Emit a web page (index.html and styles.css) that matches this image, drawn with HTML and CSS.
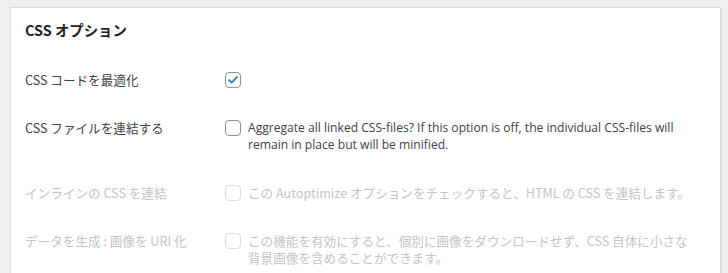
FILE: index.html
```html
<!DOCTYPE html>
<html lang="ja">
<head>
<meta charset="utf-8">
<title>CSS オプション</title>
<link rel="stylesheet" href="styles.css">
</head>
<body>
<div class="panel">
  <h2 class="title">CSS オプション</h2>
  <div class="row">
    <div class="label">CSS コードを最適化</div>
    <div class="field">
      <span class="box checked">
        <svg viewBox="0 0 16 16" width="14" height="14"><path d="M3.6 8.2 L6.6 11 L12.4 4.6" fill="none" stroke="#3582c4" stroke-width="2.2" stroke-linecap="round" stroke-linejoin="round"/></svg>
      </span>
    </div>
  </div>
  <div class="row">
    <div class="label">CSS ファイルを連結する</div>
    <div class="field">
      <span class="box"></span>
      <div class="desc en">Aggregate all linked CSS-files? If this option is off, the individual CSS-files will remain in place but will be minified.</div>
    </div>
  </div>
  <div class="row disabled">
    <div class="label">インラインの CSS を連結</div>
    <div class="field">
      <span class="box"></span>
      <div class="desc">この Autoptimize オプションをチェックすると、HTML の CSS を連結します。</div>
    </div>
  </div>
  <div class="row disabled last">
    <div class="label">データを生成 : 画像を URI 化</div>
    <div class="field">
      <span class="box"></span>
      <div class="desc">この機能を有効にすると、個別に画像をダウンロードせず、CSS 自体に小さな背景画像を含めることができます。</div>
    </div>
  </div>
</div>
</body>
</html>
```
FILE: styles.css
```css
html, body {
  margin: 0;
  padding: 0;
}
body {
  background: #f0f0f1;
  font-family: "Noto Sans CJK JP", "Noto Sans", sans-serif;
  font-size: 12.6px;
  line-height: 17px;
  color: #3c434a;
  height: 273px;
  overflow: hidden;
}
.panel {
  box-sizing: border-box;
  margin: 7px 7px 0 10px;
  height: 266px;
  overflow: hidden;
  background: #fff;
  border: 1px solid #dcdcde;
  border-bottom: none;
  box-shadow: 1px 0 1px rgba(0, 0, 0, 0.06);
  padding: 13px 14px 0 14px;
}
.title {
  margin: 0 0 18px 0;
  font-size: 14.4px;
  line-height: 17px;
  font-weight: 700;
  color: #1d2327;
}
.row {
  display: flex;
  align-items: flex-start;
  padding: 15px 0 16px 0;
}
.row.last {
  padding-bottom: 0;
}
.label {
  width: 200px;
  flex: none;
}
.field {
  display: flex;
  align-items: flex-start;
  gap: 7px;
}
.box {
  flex: none;
  width: 16px;
  height: 16px;
  box-sizing: border-box;
  border: 1px solid #8c8f94;
  border-radius: 4px;
  background: #fff;
  display: flex;
  align-items: center;
  justify-content: center;
  margin-top: 0.5px;
}
.desc {
  width: 452px;
  color: #3c434a;
}
.desc.en {
  font-family: "Open Sans", "Noto Sans", sans-serif;
  font-size: 12.1px;
}
.disabled .label,
.disabled .desc {
  color: #c3c4c7;
}
.disabled .box {
  border-color: #dcdcde;
}
```
